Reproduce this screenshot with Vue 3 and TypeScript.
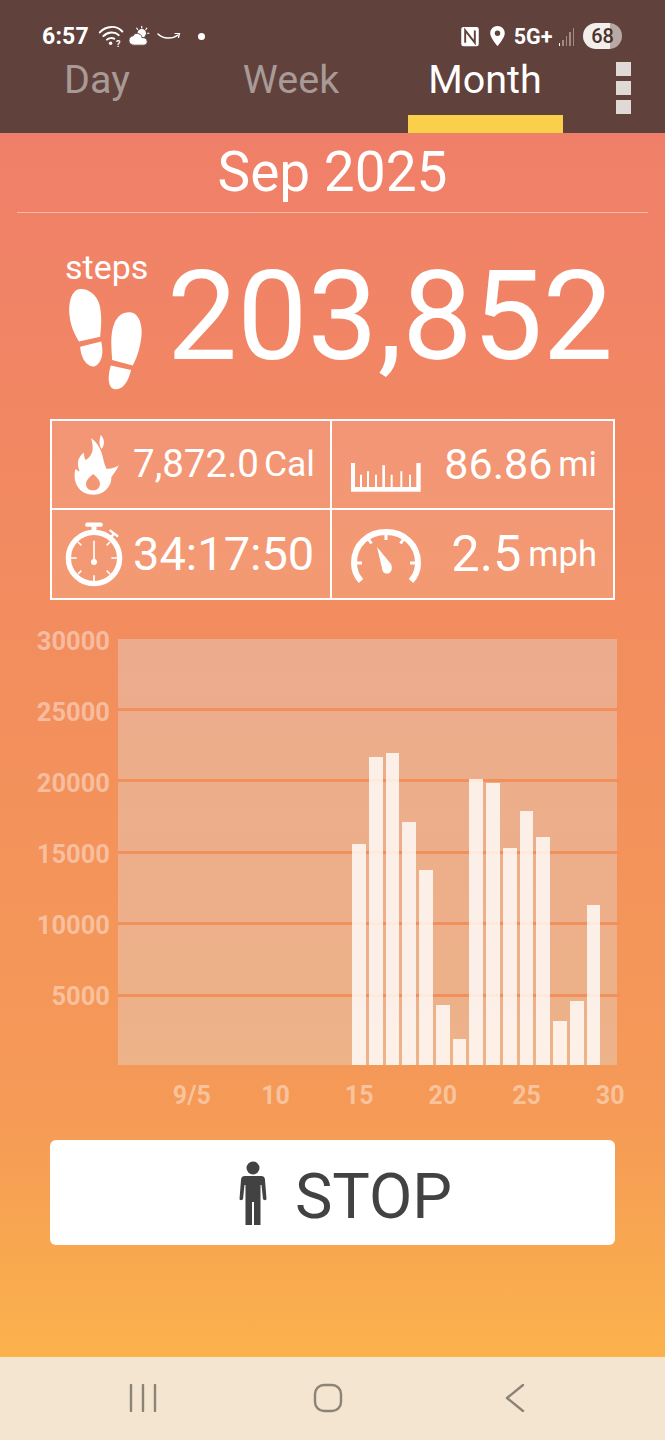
<script setup lang="ts">
interface DayBar { day: number; steps: number }
interface AxisTick { day: number; label: string }

const yLabels = [30000, 25000, 20000, 15000, 10000, 5000]
const stepsByDay: Record<number, number> = {
  15: 15650, 16: 21720, 17: 22020, 18: 17180, 19: 13780, 20: 4370, 21: 1980,
  22: 20150, 23: 19870, 24: 15330, 25: 17950, 26: 16100, 27: 3260, 28: 4680, 29: 11350,
}
const bars: DayBar[] = Array.from({ length: 30 }, (_, i) => ({ day: i + 1, steps: stepsByDay[i + 1] ?? 0 }))
const xTicks: AxisTick[] = [
  { day: 5, label: '9/5' },
  { day: 10, label: '10' },
  { day: 15, label: '15' },
  { day: 20, label: '20' },
  { day: 25, label: '25' },
  { day: 30, label: '30' },
]
// the plot is cut off a little above the real zero line
const barHeight = (steps: number) => `${(steps / 5000) * 71.5 - 2.5}px`
</script>

<template>
  <div class="phone">
    <header class="top">
      <div class="status">
        <div class="status-left">
          <span class="clock">6:57</span>
          <svg class="ico-wifi" viewBox="0 0 30 26" width="27" height="24">
            <g fill="none" stroke="#fff" stroke-width="2.2" stroke-linecap="round">
              <path d="M2 9C9 1 21 1 27 8" />
              <path d="M6 13C11 8 19 8 23 12" />
              <path d="M10 17C12 15 16 15 18 16" />
            </g>
            <circle cx="14" cy="21" r="1.9" fill="#fff" />
            <text x="20" y="25" class="wifi-q">?</text>
          </svg>
          <svg class="ico-weather" viewBox="0 0 24 24" width="22" height="22">
            <circle cx="15" cy="9" r="4.6" fill="#fff" />
            <g stroke="#fff" stroke-width="1.3" stroke-linecap="round">
              <path d="M15 1.500v1.800M9.500 3.500l1 1.400M20.500 3.500l-1 1.400M22.800 9h-1.600" />
            </g>
            <path d="M7 22C3.500 22 1 19.700 1 16.800C1 14 3 12 5.700 11.800C6.800 9.200 9.500 8.600 11.800 9.500C14 10.300 15 12 15.200 13.800C18 13.300 20.800 14.800 21 18C21.200 20.500 19.200 22 17 22Z" fill="#fff" stroke="#61413c" stroke-width="1" />
          </svg>
          <svg class="ico-amazon" viewBox="0 0 24 12" width="24" height="12">
            <path d="M1 4C6 9 15 9.500 21 5" fill="none" stroke="#fff" stroke-width="1.500" stroke-linecap="round" />
            <path d="M18 3.500L22.500 3.500L21.500 7.500" fill="none" stroke="#fff" stroke-width="1.200" stroke-linecap="round" />
          </svg>
          <span class="dot"></span>
        </div>
        <div class="status-right">
          <svg class="ico-nfc" viewBox="0 0 20 24" width="20" height="21">
            <rect x="0" y="1" width="20" height="22" rx="2.500" fill="#fff" />
            <path d="M4.500 19V5L15.500 19V5" fill="none" stroke="#61413c" stroke-width="2.200" />
          </svg>
          <svg class="ico-pin" viewBox="0 0 16 22" width="15" height="20">
            <path fill-rule="evenodd" d="M8 0C3.600 0 0 3.500 0 7.900C0 13 8 22 8 22S16 13 16 7.900C16 3.500 12.400 0 8 0ZM8 5A3 3 0 1 1 8 11A3 3 0 1 1 8 5Z" fill="#fff" />
          </svg>
          <span class="net">5G+</span>
          <span class="signal">
            <i style="height: 3px" class="on"></i>
            <i style="height: 6px"></i>
            <i style="height: 10px"></i>
            <i style="height: 14px"></i>
            <i style="height: 18px"></i>
          </span>
          <span class="battery">68</span>
        </div>
      </div>
      <nav class="tabs">
        <div class="tab">Day</div>
        <div class="tab">Week</div>
        <div class="tab active">Month</div>
        <div class="menu">
          <span></span><span></span><span></span>
        </div>
      </nav>
    </header>

    <main class="content">
      <h1 class="month">Sep 2025</h1>

      <section class="steps">
        <div class="steps-side">
          <span class="steps-word">steps</span>
          <svg class="ico-feet" viewBox="85 145 226 307" width="75" height="102">
            <g fill="#fff">
              <path d="M122 148C95 150 85 190 90 230C93 260 105 285 118 306L182 292C185 260 188 230 180 195C172 165 145 146 122 148Z" />
              <path d="M122 322L185 306C192 335 190 370 165 381C140 385 122 350 122 322Z" />
              <path d="M272 218C300 220 312 260 305 300C300 335 290 360 280 378L218 362C215 320 212 280 225 250C235 228 252 216 272 218Z" />
              <path d="M214 378L275 392C268 420 255 450 230 450C205 450 203 415 214 378Z" />
            </g>
          </svg>
        </div>
        <div class="steps-count">203,852</div>
      </section>

      <section class="stats">
        <div class="stat">
          <svg class="ico-flame" viewBox="0 0 195 225" width="65" height="75">
            <path fill="#fff" d="M107 20C115 28 119 38 116 50C114 58 111 62 109 62C105 55 102 45 104 35C105 30 106 25 107 20Z" />
            <path fill="#fff" fill-rule="evenodd" d="M78 30C92 40 104 55 110 75C115 90 116 105 124 122C136 124 150 120 161 112C155 128 145 138 139 148C140 170 124 192 102 198C76 204 50 196 38 176C28 160 26 140 32 122C36 126 40 130 44 130C38 115 36 100 44 88C48 81 52 77 57 74C57 82 58 90 62 96C70 92 78 84 82 70C85 58 82 44 78 30ZM85 138C76 146 63 155 63 168C63 180 72 187 84 187C97 187 105 178 105 167C105 155 94 148 85 138Z" />
          </svg>
          <span class="val fs38">7,872.0</span>
          <span class="unit cal">Cal</span>
        </div>
        <div class="stat">
          <svg class="ico-ruler" viewBox="66 160 210 90" width="70" height="30">
            <path fill="#fff" d="M66 163H78V235H93V198H99V235H114V188H120V235H138V198H144V235H160V170H168V235H185V198H191V235H214V188H220V235H240V198H246V235H262V163H275V249H66Z" />
          </svg>
          <span class="val fs42 push">86.86</span>
          <span class="unit mi">mi</span>
        </div>
        <div class="stat">
          <svg class="ico-watch" viewBox="0 0 210 225" width="70" height="75">
            <g fill="none" stroke="#fff">
              <circle cx="102" cy="120" r="77" stroke-width="16" />
              <path d="M102 46V25" stroke-width="15" />
              <path d="M82 20H122" stroke-width="13" stroke-linecap="round" />
              <path d="M150 60L163 46" stroke-width="8" />
              <path d="M151 38L172 54" stroke-width="7" stroke-linecap="round" />
              <path stroke-width="5" d="M102 68V128" />
              <path stroke-width="5" d="M102 172V190M32 120H50M154 120H172M54 72L64 82M150 72L140 82M54 168L64 158M150 168L140 158" />
            </g>
            <circle cx="102" cy="132" r="9" fill="#fff" />
          </svg>
          <span class="val fs46">34:17:50</span>
        </div>
        <div class="stat">
          <svg class="ico-gauge" viewBox="0 0 70 56" width="70" height="56">
            <path fill="none" stroke="#fff" stroke-width="6" d="M10 52C4.500 46 3 39 3 34C3 15.500 17 3 35 3C53 3 67 15.500 67 34C67 39 65.500 46 60 52" />
            <path fill="none" stroke="#fff" stroke-width="3" d="M35 3V11M16 8L20.500 14.500M54 8L49.500 14.500M3 34H11M59 34H67" />
            <path fill="#fff" d="M26 18L40 35C42 40 40 44 37 44.500C34 45 31 43 31 39Z" />
          </svg>
          <span class="val fs49 push">2.5</span>
          <span class="unit mph">mph</span>
        </div>
      </section>

      <section class="chart">
        <div class="y-axis">
          <span v-for="y in yLabels" :key="y" class="y-label">{{ y }}</span>
        </div>
        <div class="plot">
          <div class="grid-lines">
            <div v-for="y in yLabels" :key="y" class="grid-row"></div>
          </div>
          <div class="bars">
            <div v-for="b in bars" :key="b.day" class="bar-slot">
              <div v-if="b.steps > 0" class="bar" :style="{ height: barHeight(b.steps) }"></div>
            </div>
          </div>
        </div>
        <div class="x-axis">
          <span
            v-for="t in xTicks"
            :key="t.day"
            class="x-label"
            :style="{ gridColumn: t.day }"
          >{{ t.label }}</span>
        </div>
      </section>

      <button class="stop" type="button">
        <svg viewBox="0 0 28 64" width="28" height="64">
          <circle cx="14" cy="7" r="6.500" fill="#424242" />
          <path fill="#424242" d="M6 15H22C25 15 26 17 26 19L27.500 38C27.500 39.500 24.500 39.500 24 38L22.500 24H21.500V64H15V41H13V64H6.500V24H5.500L4 38C3.500 39.500 .5 39.500 .5 38L2 19C2 17 3 15 6 15Z" />
        </svg>
        <span class="stop-word">STOP</span>
      </button>
    </main>

    <footer class="navbar">
      <svg viewBox="0 0 28 28" width="28" height="28">
        <path d="M2 1V27M14 1V27M26 1V27" fill="none" stroke="#8b8375" stroke-width="2.400" stroke-linecap="round" />
      </svg>
      <svg class="nav-home" viewBox="0 0 30 30" width="30" height="30">
        <rect x="2" y="2" width="26" height="26" rx="9" fill="none" stroke="#8b8375" stroke-width="2.400" />
      </svg>
      <svg class="nav-back" viewBox="0 0 20 28" width="20" height="28">
        <path d="M18 1L2 14L18 27" fill="none" stroke="#8b8375" stroke-width="2.400" stroke-linecap="round" stroke-linejoin="round" />
      </svg>
    </footer>
  </div>
</template>

<style>
html, body { margin: 0; padding: 0; }
</style>

<style scoped>
.phone {
  width: 665px;
  height: 1440px;
  display: flex;
  flex-direction: column;
  font-family: Roboto, "Liberation Sans", sans-serif;
  overflow: hidden;
  background: #f3e5d0;
}

.top { height: 133px; background: #61413c; display: flex; flex-direction: column; flex-shrink: 0; }
.status { height: 58px; padding: 22px 43px 0 42px; box-sizing: border-box; display: flex; justify-content: space-between; align-items: flex-start; }
.status-left, .status-right { display: flex; align-items: center; height: 28px; }
.clock { color: #fff; font-size: 23px; font-weight: 700; letter-spacing: .2px; margin-right: 9px; }
.ico-weather { margin-left: 3px; }
.ico-amazon { margin-left: 7px; }
.dot { width: 7px; height: 7px; border-radius: 50%; background: #fff; margin-left: 17px; }
.wifi-q { font: 700 10px Roboto, sans-serif; fill: #fff; }
.ico-pin { margin-left: 10px; }
.net { color: #fff; font-size: 21.500px; font-weight: 700; margin-left: 9px; }
.signal { display: flex; align-items: flex-end; gap: 2px; height: 20px; margin-left: 6px; }
.signal i { width: 1.500px; background: #a08c86; display: block; }
.signal i.on { background: #fff; }
.battery {
  width: 39px;
  height: 26px;
  margin-left: 9px;
  border-radius: 13px;
  background: linear-gradient(90deg, #f2eeec 68%, #b9a9a4 68%);
  color: #4a322d;
  font-size: 20px;
  font-weight: 500;
  display: flex;
  align-items: center;
  justify-content: center;
}

.tabs { flex: 1; display: flex; }
.tab {
  width: 194px;
  box-sizing: border-box;
  text-align: center;
  font-size: 39.500px;
  line-height: 44px;
  color: #a89a96;
}
.tab.active { color: #fff; position: relative; }
.tab.active::after {
  content: "";
  position: absolute;
  left: 20px;
  right: 19px;
  bottom: 0;
  height: 18px;
  background: #fad04b;
}
.menu { flex: 1; display: flex; flex-direction: column; align-items: center; gap: 5px; padding-top: 4px; }
.menu span { width: 15px; height: 14px; background: #e0d9d6; display: block; }

.content {
  flex: 1;
  display: flex;
  flex-direction: column;
  background: linear-gradient(180deg, #f07f69 0%, #f3905c 50%, #f59a57 80%, #fbb24b 100%);
}
.month {
  margin: 0 17px;
  height: 80px;
  box-sizing: border-box;
  border-bottom: 1px solid rgba(255, 255, 255, .45);
  color: #fff;
  font-size: 55px;
  font-weight: 400;
  line-height: 78px;
  text-align: center;
}

.steps { display: flex; height: 206px; box-sizing: border-box; padding: 36px 0 0 65px; }
.steps-side { width: 102px; display: flex; flex-direction: column; }
.steps-word { color: #fff; font-size: 34px; line-height: 36px; }
.ico-feet { margin: 3px 0 0 3px; }
.steps-count { color: #fff; font-size: 125px; line-height: 126px; margin-top: 5px; white-space: nowrap; }

.stats {
  margin: 0 50px;
  height: 181px;
  box-sizing: border-box;
  border: 2px solid #fff;
  display: grid;
  grid-template-columns: 280px 1fr;
  grid-template-rows: 1fr 1fr;
  background: rgba(255, 255, 255, .12);
}
.stat {
  display: flex;
  align-items: center;
  color: #fff;
  padding: 0 16px 0 13px;
  white-space: nowrap;
}
.stat:nth-child(odd) { border-right: 2px solid #fff; }
.stat:nth-child(-n+2) { border-bottom: 2px solid #fff; }
.push { margin-left: auto; }
.val { line-height: 1; }
.fs38 { font-size: 38.500px; }
.fs42 { font-size: 43px; }
.fs46 { font-size: 47px; }
.fs49 { font-size: 50.500px; }
.unit { font-size: 34.500px; line-height: 1; margin-left: 6px; }
.cal { margin-left: 5px; font-size: 35.500px; }
.mph { margin-left: 7px; }
.ico-flame { margin: 2px 3px 0 0; flex-shrink: 0; }
.ico-watch { margin: 3px 3px 0 -5px; flex-shrink: 0; }
.ico-ruler { margin: 26px 0 0 6px; flex-shrink: 0; }
.ico-gauge { margin: 6px 0 0 6px; flex-shrink: 0; }

.chart {
  margin-top: 39px;
  display: grid;
  grid-template-columns: 118px 499px;
  grid-template-rows: 426px auto;
}
.y-axis { display: flex; flex-direction: column; }
.y-label {
  height: 71.500px;
  box-sizing: border-box;
  padding-right: 8px;
  margin-top: 1px;
  margin-bottom: -1px;
  text-align: right;
  font-size: 25.500px;
  font-weight: 700;
  line-height: 2px;
  color: rgba(255, 255, 255, .42);
}
.plot { display: grid; background: rgba(225, 225, 225, .36); }
.grid-lines, .bars { grid-area: 1 / 1; }
.grid-lines { display: flex; flex-direction: column; margin-top: -3px; }
.grid-row { height: 71.500px; box-sizing: border-box; border-top: 3px solid #f2905c; }
.grid-row:first-child { border-top-color: transparent; }
.bars { display: grid; grid-template-columns: repeat(30, 16.740px); align-items: end; }
.bar-slot { display: flex; align-items: flex-end; }
.bar { width: 13.700px; background: rgba(255, 255, 255, .8); }
.x-axis {
  grid-column: 2;
  display: grid;
  grid-template-columns: repeat(30, 16.740px);
  height: 60px;
  padding-top: 17px;
  box-sizing: border-box;
}
.x-label {
  display: flex;
  justify-content: center;
  margin-right: 3px;
  white-space: nowrap;
  font-size: 25px;
  font-weight: 700;
  color: rgba(255, 255, 255, .42);
  line-height: 27px;
  grid-row: 1;
}

.stop {
  margin: 15px 50px 0;
  height: 105px;
  border: 0;
  border-radius: 6px;
  background: #fff;
  display: flex;
  align-items: center;
  justify-content: center;
  gap: 28px;
  color: #424242;
  font-family: Roboto, "Liberation Sans", sans-serif;
  font-size: 63px;
  padding: 0 0 0 26px;
}
.stop-word { margin-top: 7px; }

.navbar {
  height: 83px;
  flex-shrink: 0;
  background: #f3e5d0;
  display: flex;
  align-items: center;
  padding: 0 0 2px 129px;
  box-sizing: border-box;
}
.nav-home { margin-left: 156px; }
.nav-back { margin-left: 162px; }
</style>
